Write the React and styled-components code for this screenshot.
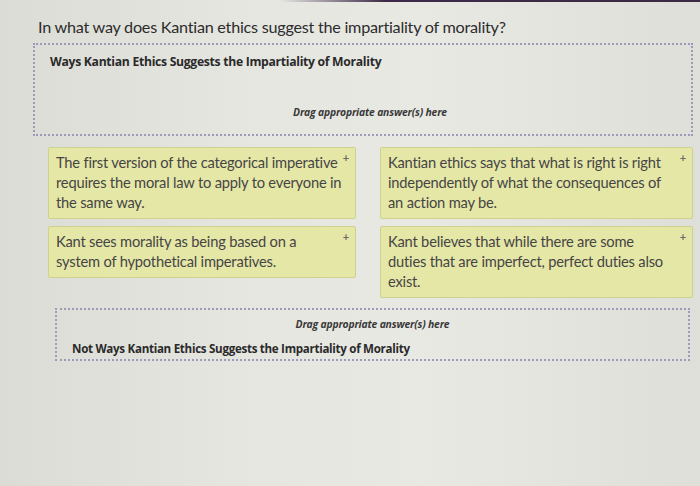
import React from 'react'
import styled, { createGlobalStyle } from 'styled-components'

const GlobalStyle = createGlobalStyle`
  html, body {
    margin: 0;
    padding: 0;
  }
  body {
    width: 700px;
    height: 486px;
    overflow: hidden;
    font-family: "Lato", "Open Sans", sans-serif;
    background: linear-gradient(90deg, #dcdcd6 0%, #e6e6e1 35%, #e9e9e4 60%, #dfdfda 100%);
  }
`

// lines kept as laid out in the answer bank
const answers = [
  ['The first version of the categorical imperative', 'requires the moral law to apply to everyone in', 'the same way.'],
  ['Kantian ethics says that what is right is right', 'independently of what the consequences of', 'an action may be.'],
  ['Kant sees morality as being based on a', 'system of hypothetical imperatives.'],
  ['Kant believes that while there are some', 'duties that are imperfect, perfect duties also', 'exist.'],
]

const App = () => {
  return (
    <Page>
      <GlobalStyle />
      <TopEdge />
      <Question>In what way does Kantian ethics suggest the impartiality of morality?</Question>

      <DropZone>
        <ZoneTitle>Ways Kantian Ethics Suggests the Impartiality of Morality</ZoneTitle>
        <DragHint $top={35} $shift={14}>Drag appropriate answer(s) here</DragHint>
      </DropZone>

      <Answers>
        {answers.map((lines) => (
          <Card key={lines[0]}>
            {lines.map((l) => (
              <Line key={l}>{l}</Line>
            ))}
            <Plus>+</Plus>
          </Card>
        ))}
      </Answers>

      <BottomZone>
        <DragHint $top={0} $shift={0}>Drag appropriate answer(s) here</DragHint>
        <ZoneTitle $bottom>Not Ways Kantian Ethics Suggests the Impartiality of Morality</ZoneTitle>
      </BottomZone>
    </Page>
  )
}

const Page = styled.div`
  position: relative;
  padding: 17px 7px 0 33px;
  color: #2e2e2e;
`

const TopEdge = styled.div`
  position: absolute;
  top: 0;
  left: 0;
  right: 0;
  height: 2px;
  background: linear-gradient(90deg, rgba(60, 40, 70, 0) 40%, #3e2a48 55%, #3a2a45 100%);
`

const Question = styled.h1`
  margin: 0 0 6px 5px;
  font-family: "Lato", sans-serif;
  font-size: 16.2px;
  line-height: 20px;
  font-weight: 400;
  color: #2c2c2c;
  letter-spacing: -0.25px;
`

const DropZone = styled.div`
  box-sizing: border-box;
  height: 93px;
  border: 2px dotted #9c9cba;
  padding: 8px 15px 0;
  display: flex;
  flex-direction: column;
`

const ZoneTitle = styled.div`
  font-family: "Open Sans", sans-serif;
  font-size: ${(p) => (p.$bottom ? '11.6px' : '12.2px')};
  font-weight: 700;
  color: #2a2a2a;
  letter-spacing: -0.3px;
  margin-top: ${(p) => (p.$bottom ? '10px' : '0')};
`

const DragHint = styled.div`
  margin-top: ${(p) => p.$top}px;
  padding-left: ${(p) => p.$shift}px;
  text-align: center;
  font-family: "Open Sans", sans-serif;
  font-size: 10.4px;
  font-style: italic;
  font-weight: 700;
  color: #3a3a3a;
  letter-spacing: -0.2px;
`

const Answers = styled.div`
  display: grid;
  grid-template-columns: 308px 313px;
  column-gap: 24px;
  row-gap: 7px;
  align-items: start;
  margin: 11px 0 0 15px;
`

const Card = styled.div`
  position: relative;
  background: #e5e7a7;
  border: 1px solid #cfd18e;
  border-radius: 2px;
  padding: 4px 12px 6px 7px;
  font-size: 14.7px;
  line-height: 20px;
  letter-spacing: -0.2px;
  color: #454545;
  white-space: nowrap;
`

const Line = styled.span`
  display: block;
`

const Plus = styled.span`
  position: absolute;
  top: 5px;
  right: 6px;
  font-size: 11px;
  line-height: 10px;
  font-weight: 700;
  color: #6a6a6a;
`

const BottomZone = styled.div`
  box-sizing: border-box;
  margin: 10px 0 0 22px;
  width: 635px;
  height: 53px;
  border: 2px dotted #9c9cba;
  padding: 7px 15px 0;
`

export default App
